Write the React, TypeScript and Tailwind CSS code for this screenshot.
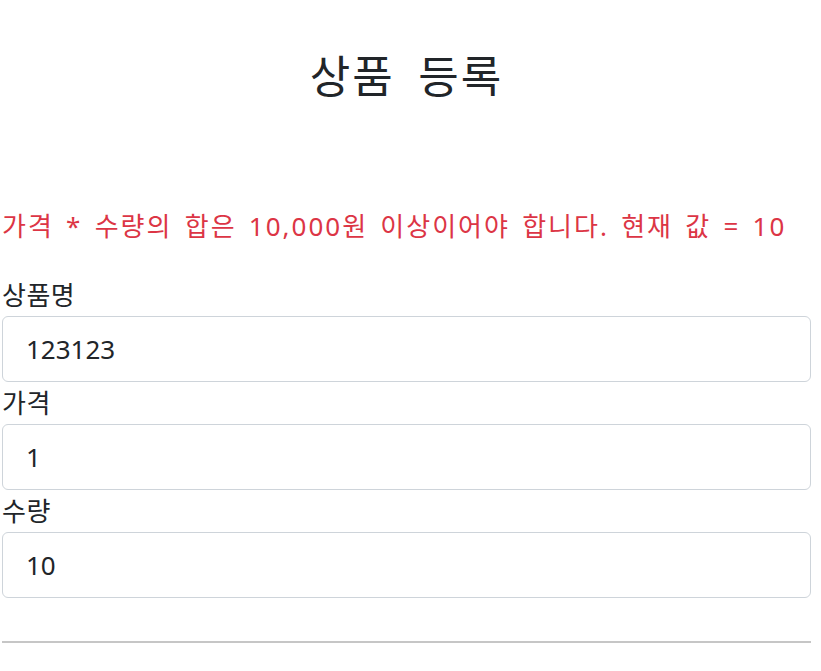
import React from "react";

const font = { fontFamily: '"Noto Sans", "Noto Sans CJK KR", sans-serif' };

export default function App() {
  return (
    <div className="bg-white min-h-[671px] text-[#212529]" style={font}>
      <div className="ml-[2px] w-[809px]">
        <div className="pt-[46px] h-[152px] text-center text-[44px] leading-[60px] tracking-[2px] [word-spacing:10px]">상품 등록</div>
        <div className="mt-[56px] text-[26px] leading-[36px] text-[#dc3545] tracking-[2px] [word-spacing:3.5px] whitespace-nowrap">
          가격 * 수량의 합은 10,000원 이상이어야 합니다. 현재 값 = 10
        </div>
        <div className="mt-[30px]">
          {[
            ["상품명", "123123"],
            ["가격", "1"],
            ["수량", "10"],
          ].map(([label, value]) => (
            <div key={label}>
              <div className="text-[26px] leading-[42px] h-[42px] tracking-[0.5px]">{label}</div>
              <div className="h-[66px] border border-[#ced4da] rounded-[6px] px-[23px] flex items-center text-[26px]">
                {value}
              </div>
            </div>
          ))}
        </div>
        <div className="mt-[43px] h-[2px] bg-[#c6c6c6]" />
      </div>
    </div>
  );
}
